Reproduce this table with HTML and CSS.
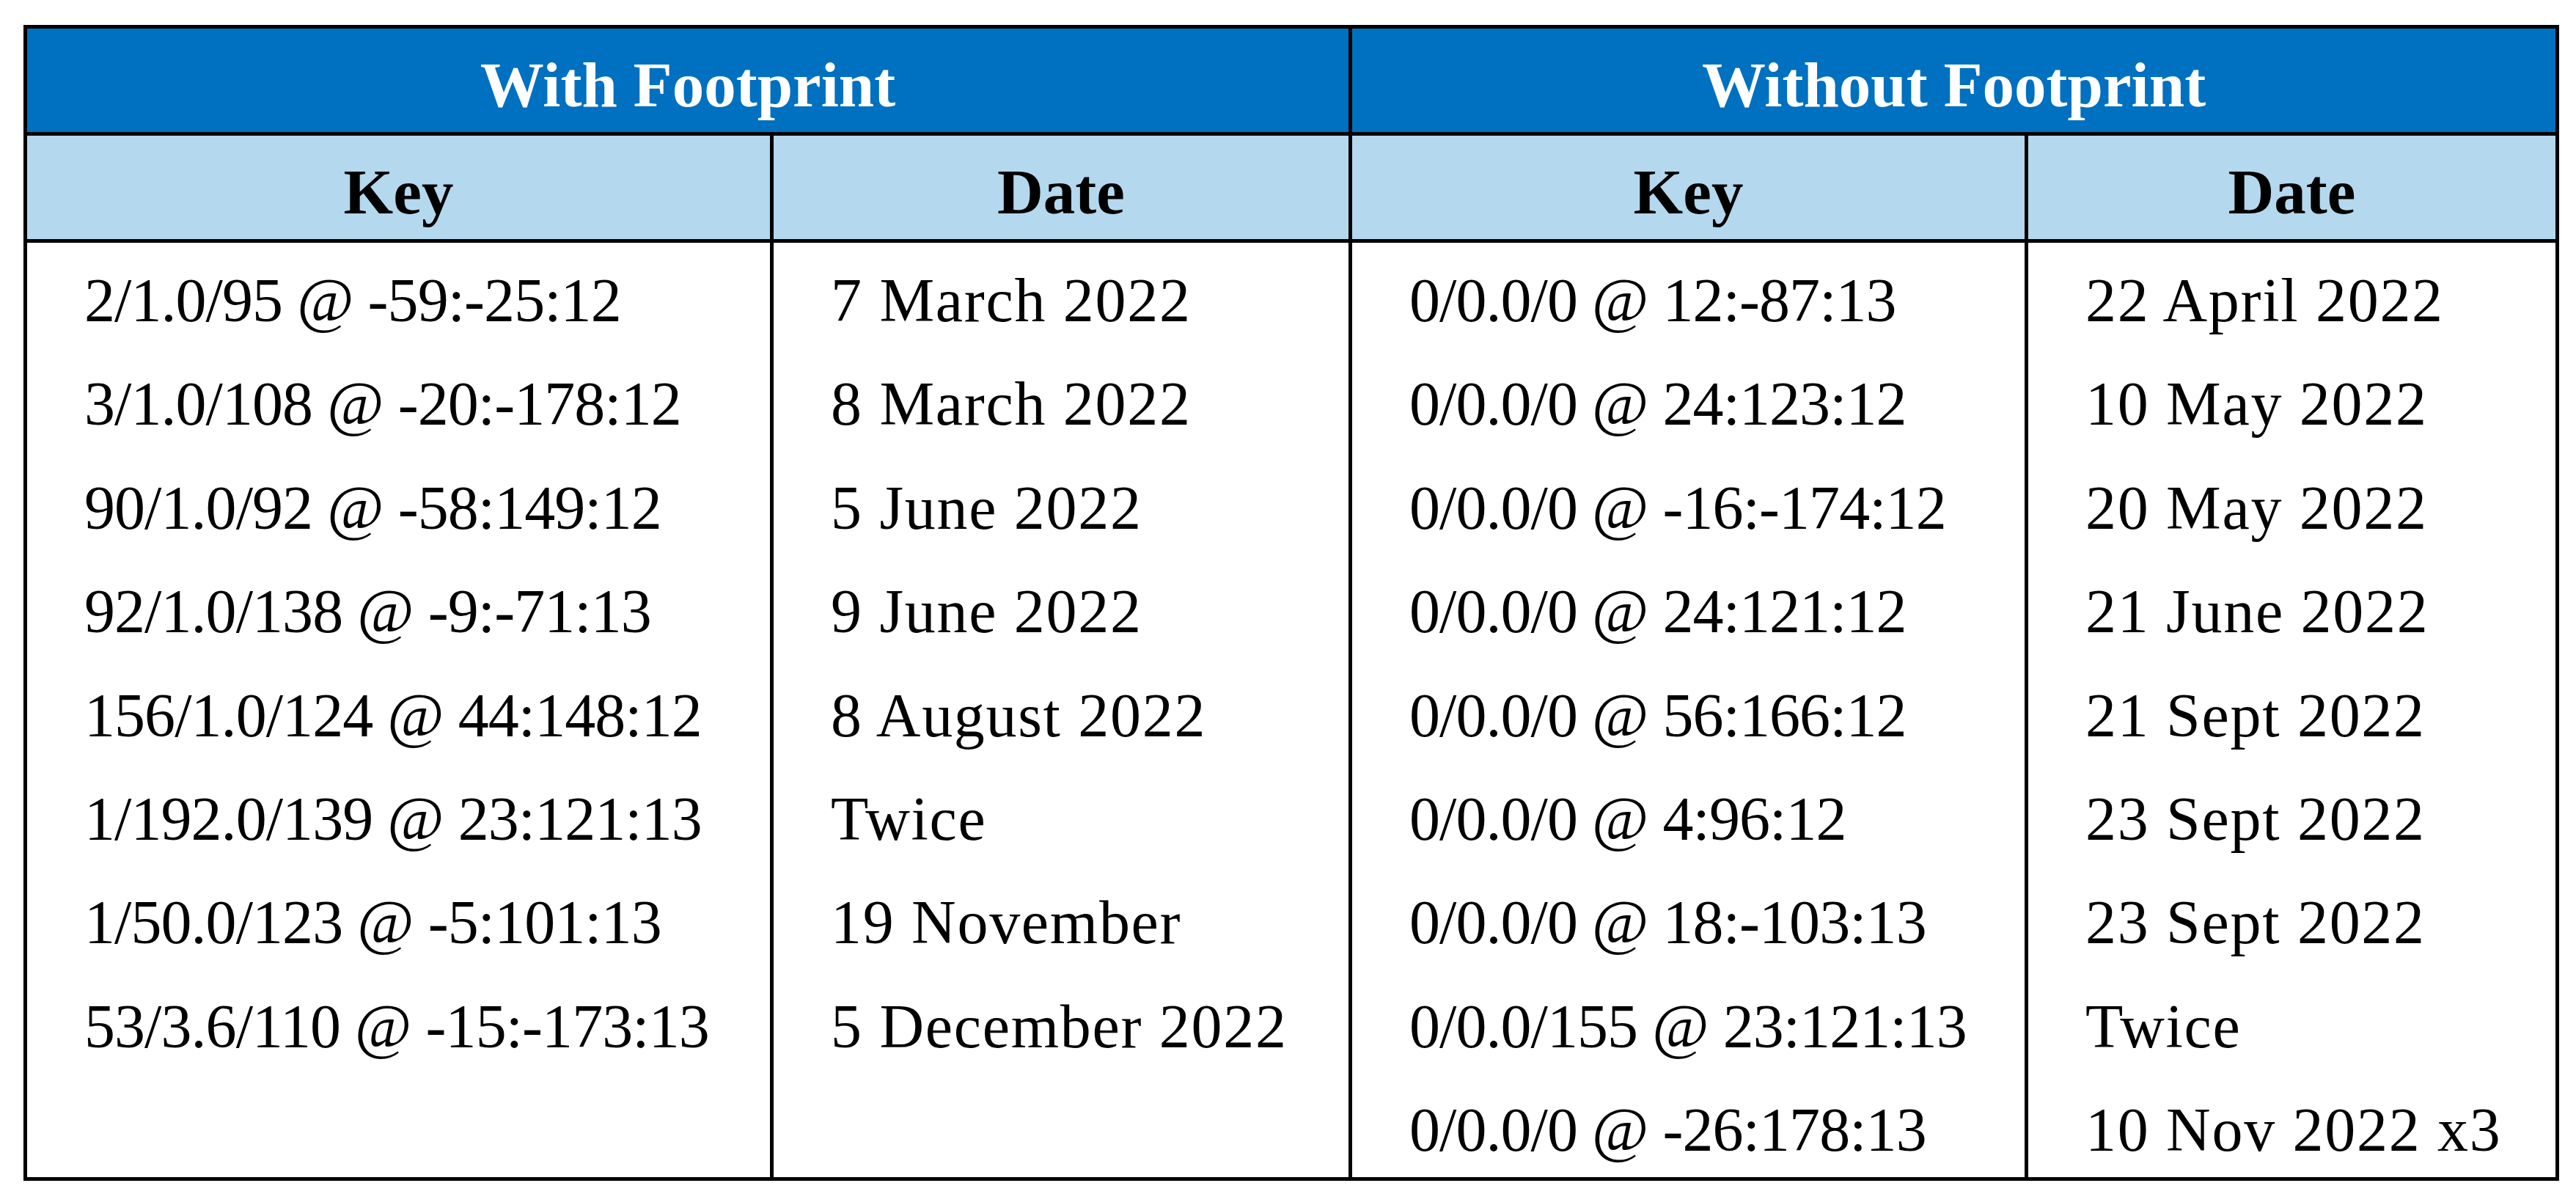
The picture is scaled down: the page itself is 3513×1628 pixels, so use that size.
FILE: index.html
```html
<!DOCTYPE html>
<html lang="en">
<head>
<meta charset="utf-8">
<title>Footprint table</title>
<link rel="stylesheet" href="styles.css">
</head>
<body>
<div class="table">
  <div class="group">With Footprint</div>
  <div class="group">Without Footprint</div>
  <div class="sub">Key</div>
  <div class="sub">Date</div>
  <div class="sub">Key</div>
  <div class="sub">Date</div>
  <div class="col key">
    <div class="line">2/1.0/95 @ -59:-25:12</div>
    <div class="line">3/1.0/108 @ -20:-178:12</div>
    <div class="line">90/1.0/92 @ -58:149:12</div>
    <div class="line">92/1.0/138 @ -9:-71:13</div>
    <div class="line">156/1.0/124 @ 44:148:12</div>
    <div class="line">1/192.0/139 @ 23:121:13</div>
    <div class="line">1/50.0/123 @ -5:101:13</div>
    <div class="line">53/3.6/110 @ -15:-173:13</div>
  </div>
  <div class="col date">
    <div class="line">7 March 2022</div>
    <div class="line">8 March 2022</div>
    <div class="line">5 June 2022</div>
    <div class="line">9 June 2022</div>
    <div class="line">8 August 2022</div>
    <div class="line">Twice</div>
    <div class="line">19 November</div>
    <div class="line">5 December 2022</div>
  </div>
  <div class="col key">
    <div class="line">0/0.0/0 @ 12:-87:13</div>
    <div class="line">0/0.0/0 @ 24:123:12</div>
    <div class="line">0/0.0/0 @ -16:-174:12</div>
    <div class="line">0/0.0/0 @ 24:121:12</div>
    <div class="line">0/0.0/0 @ 56:166:12</div>
    <div class="line">0/0.0/0 @ 4:96:12</div>
    <div class="line">0/0.0/0 @ 18:-103:13</div>
    <div class="line">0/0.0/155 @ 23:121:13</div>
    <div class="line">0/0.0/0 @ -26:178:13</div>
  </div>
  <div class="col date">
    <div class="line">22 April 2022</div>
    <div class="line">10 May 2022</div>
    <div class="line">20 May 2022</div>
    <div class="line">21 June 2022</div>
    <div class="line">21 Sept 2022</div>
    <div class="line">23 Sept 2022</div>
    <div class="line">23 Sept 2022</div>
    <div class="line">Twice</div>
    <div class="line">10 Nov 2022 x3</div>
  </div>
</div>
</body>
</html>
```

FILE: styles.css
```css
html, body {
  margin: 0;
  background: #ffffff;
}

body {
  padding: 34px 0 0 32px;
  font-family: "Liberation Serif", "Times New Roman", serif;
  color: #000000;
}

.table {
  display: grid;
  grid-template-columns: 1013px 784px 917px 719px;
  grid-template-rows: 141px 141px 1274px;
  gap: 5px;
  padding: 5px;
  background: #000000;
  width: max-content;
}

.group,
.sub {
  font-weight: bold;
  font-size: 87px;
  line-height: 129px;
  padding-top: 12px;
  text-align: center;
  white-space: nowrap;
}

.group {
  grid-column: span 2;
  background: #0070c0;
  color: #ffffff;
}

.sub {
  background: #b4d8ee;
  color: #000000;
}

.col {
  background: #ffffff;
  padding: 8px 0 0 78px;
  font-size: 84px;
}

.line {
  height: 141.4px;
  line-height: 141.4px;
  white-space: nowrap;
}

.key {
  letter-spacing: -0.95px;
}

.date {
  letter-spacing: 1.7px;
}
```
